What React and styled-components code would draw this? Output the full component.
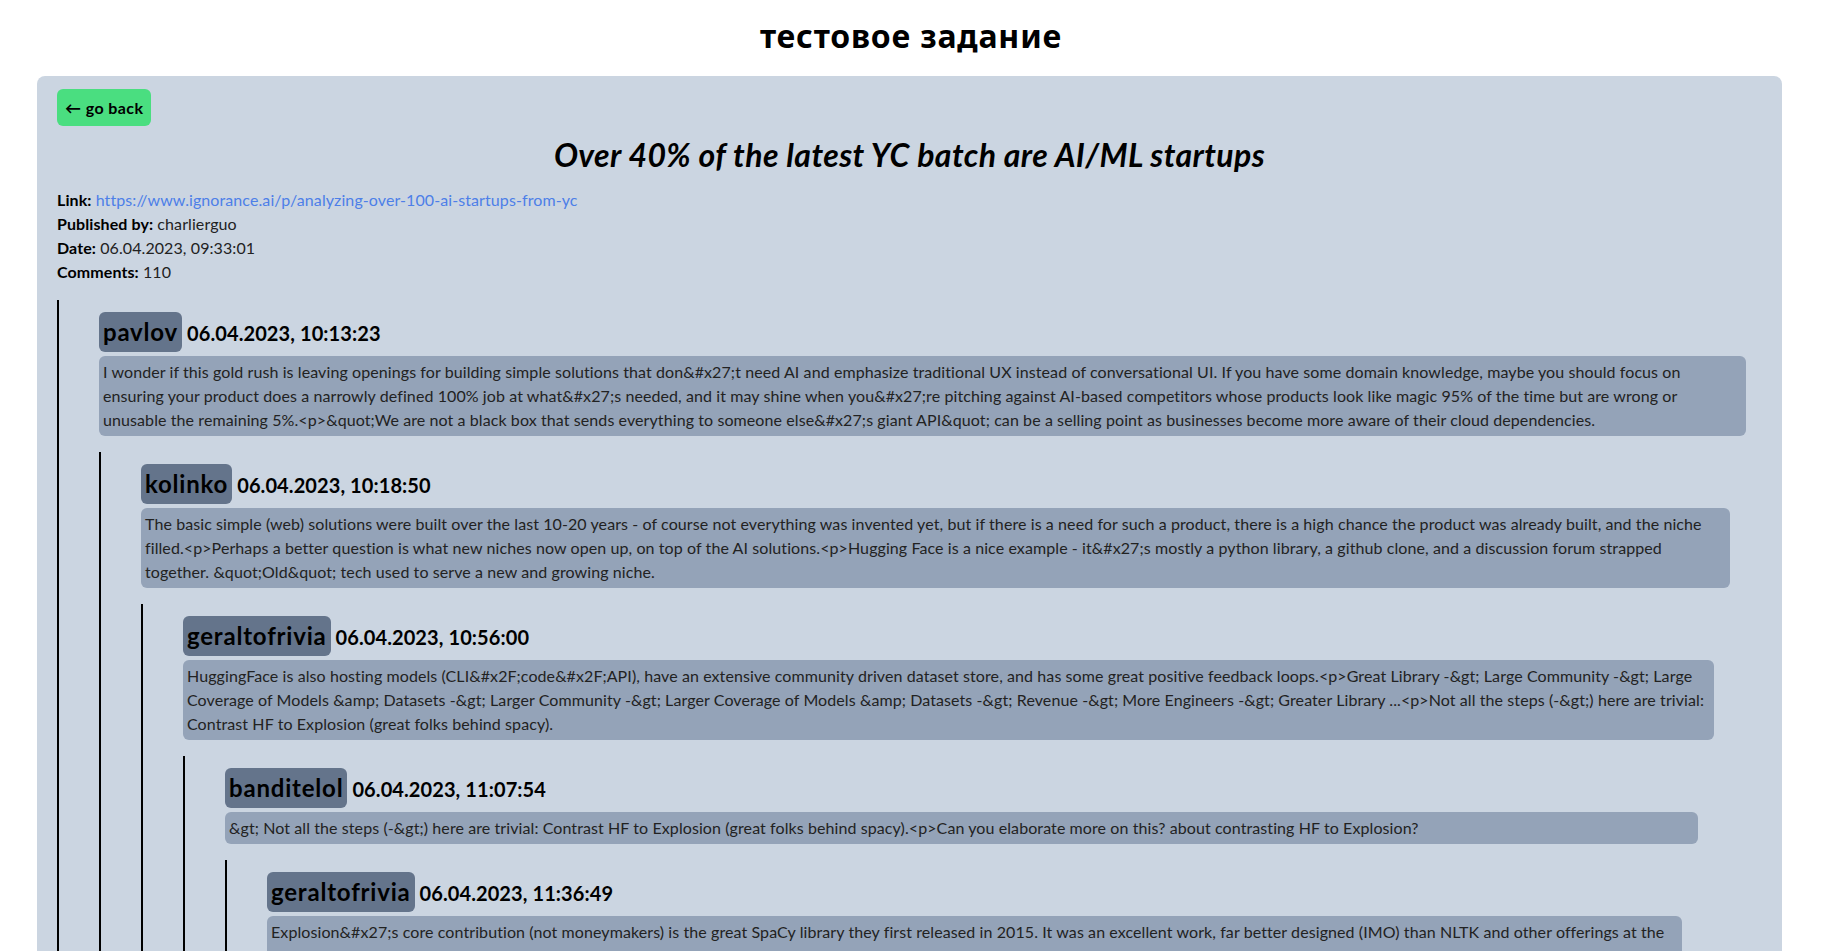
import React from "react";
import styled, { createGlobalStyle } from "styled-components";

const post = {
  title: "Over 40% of the latest YC batch are AI/ML startups",
  url: "https://www.ignorance.ai/p/analyzing-over-100-ai-startups-from-yc",
  by: "charlierguo",
  date: "06.04.2023, 09:33:01",
  comments: 110,
};

const thread = {
  id: 1,
  by: "pavlov",
  date: "06.04.2023, 10:13:23",
  text: "I wonder if this gold rush is leaving openings for building simple solutions that don&#x27;t need AI and emphasize traditional UX instead of conversational UI. If you have some domain knowledge, maybe you should focus on ensuring your product does a narrowly defined 100% job at what&#x27;s needed, and it may shine when you&#x27;re pitching against AI-based competitors whose products look like magic 95% of the time but are wrong or unusable the remaining 5%.<p>&quot;We are not a black box that sends everything to someone else&#x27;s giant API&quot; can be a selling point as businesses become more aware of their cloud dependencies.",
  kids: [
    {
      id: 2,
      by: "kolinko",
      date: "06.04.2023, 10:18:50",
      text: "The basic simple (web) solutions were built over the last 10-20 years - of course not everything was invented yet, but if there is a need for such a product, there is a high chance the product was already built, and the niche filled.<p>Perhaps a better question is what new niches now open up, on top of the AI solutions.<p>Hugging Face is a nice example - it&#x27;s mostly a python library, a github clone, and a discussion forum strapped together. &quot;Old&quot; tech used to serve a new and growing niche.",
      kids: [
        {
          id: 3,
          by: "geraltofrivia",
          date: "06.04.2023, 10:56:00",
          text: "HuggingFace is also hosting models (CLI&#x2F;code&#x2F;API), have an extensive community driven dataset store, and has some great positive feedback loops.<p>Great Library -&gt; Large Community -&gt; Large Coverage of Models &amp; Datasets -&gt; Larger Community -&gt; Larger Coverage of Models &amp; Datasets -&gt; Revenue -&gt; More Engineers -&gt; Greater Library ...<p>Not all the steps (-&gt;) here are trivial: Contrast HF to Explosion (great folks behind spacy).",
          kids: [
            {
              id: 4,
              by: "banditelol",
              date: "06.04.2023, 11:07:54",
              text: "&gt; Not all the steps (-&gt;) here are trivial: Contrast HF to Explosion (great folks behind spacy).<p>Can you elaborate more on this? about contrasting HF to Explosion?",
              kids: [
                {
                  id: 5,
                  by: "geraltofrivia",
                  date: "06.04.2023, 11:36:49",
                  text: "Explosion&#x27;s core contribution (not moneymakers) is the great SpaCy library they first released in 2015. It was an excellent work, far better designed (IMO) than NLTK and other offerings at the time. Before that, most NLP tooling was a loose collection of academic projects with obscure interfaces, and SpaCy made it accessible to regular developers who simply wanted to get things done.",
                  kids: [],
                },
              ],
            },
          ],
        },
      ],
    },
  ],
};

const Comment = ({ by, date, text, kids }) => {
  return (
    <Thread>
      <Header>
        <UserName>{by}</UserName>
        <DateText>{date}</DateText>
      </Header>
      <Body>{text}</Body>
      {kids.map((kid) => (
        <Comment key={kid.id} {...kid} />
      ))}
    </Thread>
  );
};

const App = () => {
  return (
    <>
      <GlobalStyle />
      <PageTitle>тестовое задание</PageTitle>
      <Panel>
        <BackButton>← go back</BackButton>
        <PostTitle>{post.title}</PostTitle>
        <Meta>
          <b>Link:</b> <MetaLink href={post.url}>{post.url}</MetaLink>
        </Meta>
        <Meta>
          <b>Published by:</b> {post.by}
        </Meta>
        <Meta>
          <b>Date:</b> {post.date}
        </Meta>
        <Meta>
          <b>Comments:</b> {post.comments}
        </Meta>
        <Comment {...thread} />
      </Panel>
    </>
  );
};

const GlobalStyle = createGlobalStyle`
  html {
    scrollbar-width: none;
  }
  html::-webkit-scrollbar {
    display: none;
  }
  body {
    margin: 0;
    background: #fff;
    color: #000;
    font-family: Lato, "Noto Sans", sans-serif;
    letter-spacing: 0.09px;
  }
`;

const PageTitle = styled.h1`
  margin: 12px 0 16px;
  font-family: "Noto Sans", Lato, sans-serif;
  font-size: 32px;
  line-height: 48px;
  font-weight: 700;
  letter-spacing: 0.8px;
  text-align: center;
`;

const Panel = styled.main`
  margin: 0 40px 0 37px;
  padding: 13px 20px 20px;
  background: #cbd5e1;
  border-radius: 8px;
`;

const BackButton = styled.button`
  display: block;
  height: 37px;
  padding: 0 8px;
  border: none;
  border-radius: 6px;
  background: #4ade80;
  color: #000;
  font-family: inherit;
  font-size: 16px;
  font-weight: 700;
  letter-spacing: 0.4px;
  cursor: pointer;
`;

const PostTitle = styled.h2`
  margin: 5px 0 9px;
  font-size: 32px;
  line-height: 48px;
  font-weight: 700;
  font-style: italic;
  letter-spacing: 0.4px;
  text-align: center;
`;

const Meta = styled.p`
  margin: 0;
  font-size: 16px;
  line-height: 24px;
  color: #222;

  b {
    color: #000;
  }
`;

const MetaLink = styled.a`
  color: #4d7fe8;
  text-decoration: none;
`;

const Thread = styled.div`
  margin-top: 16px;
  padding: 12px 16px 0 40px;
  border-left: 2px solid #000;
`;

const Header = styled.div`
  display: flex;
  align-items: baseline;
  gap: 5px;
  margin-bottom: 4px;
`;

const UserName = styled.span`
  padding: 4px;
  border-radius: 6px;
  background: #64748b;
  font-size: 24px;
  line-height: 32px;
  font-weight: 700;
  letter-spacing: 0.8px;
`;

const DateText = styled.span`
  font-size: 20px;
  font-weight: 700;
`;

const Body = styled.div`
  padding: 4px;
  border-radius: 6px;
  background: #94a3b8;
  color: #222;
  font-size: 16px;
  line-height: 24px;
`;

export default App;
